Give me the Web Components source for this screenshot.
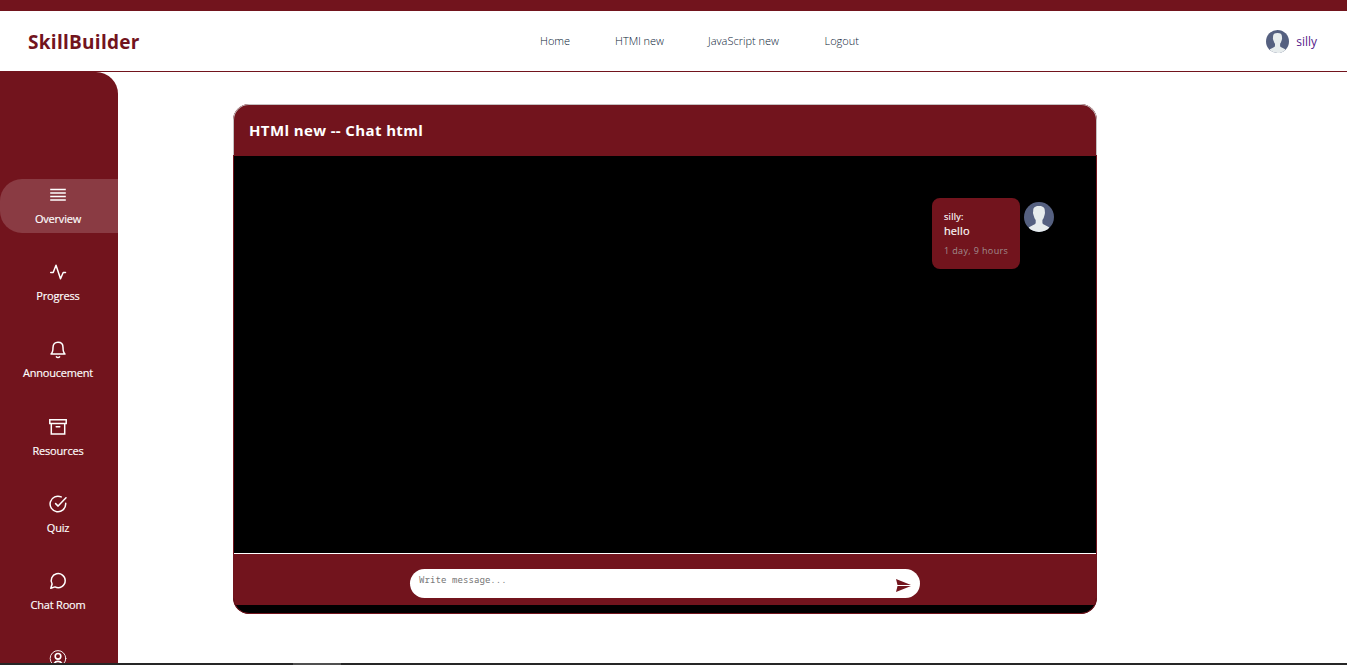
<!DOCTYPE html>
<html lang="en">
<head>
<meta charset="utf-8">
<title>SkillBuilder</title>
<style>
html,body{margin:0;height:100%;overflow:hidden;background:#fff;font-family:"Open Sans","Noto Sans",sans-serif}
</style>
</head>
<body>
<skill-app></skill-app>
<script>
const define = (name, html, setup) => customElements.define(name, class extends HTMLElement {
  constructor() {
    super();
    const t = document.createElement('template');
    t.innerHTML = html;
    this.attachShadow({mode: 'open'}).append(t.content.cloneNode(true));
  }
  connectedCallback() { if (setup) setup(this, this.shadowRoot); }
});

define('user-avatar', `
<style>:host{display:block;width:var(--size,30px);height:var(--size,30px);border-radius:50%;overflow:hidden;flex:none}svg{display:block;width:100%;height:100%}</style>
<svg viewBox="0 0 30 30"><rect width="30" height="30" fill="#556080"/><path fill="#e7eced" d="M9.200 8.500C9.200 5.500 11 4 15 4s5.800 1.500 5.800 4.500c0 1.200.4 2.300 0 3.500-.2 1-.4 1.600-.7 2.500-.3 1.600-1 2.700-1.700 3.400v2.600c0 1 .6 1.600 1.500 2l5.200 2.700V30H5v-4.800l5.200-2.700c.9-.4 1.500-1 1.500-2v-2.600c-.7-.7-1.400-1.800-1.700-3.400-.3-.9-.6-1.500-.8-2.500-.4-1.200 0-2.300 0-3.500z"/></svg>`);

define('app-header', `
<style>
:host{display:grid;grid-template-columns:540px 1fr auto;align-items:center;height:60px;border-bottom:1px solid #72141d;background:#fff}
.logo{padding-left:28px;padding-top:1px;font-size:19px;line-height:26px;font-weight:700;color:#72141d;letter-spacing:.28px}
nav{display:flex;font-size:11px;line-height:16px;color:#0a2236;font-weight:300;white-space:nowrap}
.user{display:flex;align-items:center;gap:7px;padding:1px 30px 0 0;--size:23px;font-size:12px;line-height:18px;color:#551a8b}
.user slot{display:block;padding-top:1px}
</style>
<div class="logo"><slot name="logo"></slot></div>
<nav><slot></slot></nav>
<div class="user"><user-avatar></user-avatar><slot name="user"></slot></div>`);

define('nav-link', `
<style>:host{display:block;width:var(--w);letter-spacing:var(--ls,0)}</style><slot></slot>`);

const icons = {
  menu: '<g stroke-width="1.4" stroke-linecap="butt"><path d="M1.200 3.500h15.600M1.200 7h15.600M1.200 10.500h15.600M1.200 14h15.600"/></g>',
  activity: '<path d="M1.700 9.500h2.500L7 2.300l4.500 13.400 2.700-6.200h2.300"/>',
  bell: '<path d="M2 14c1.400-1.200 2-2.800 2-6.500C4 4 6 2.300 9 2.300S14 4 14 7.500c0 3.700.6 5.300 2 6.500zM7.400 16.900c.6.8 2.600.8 3.200 0"/>',
  archive: '<path stroke-linejoin="miter" d="M.8 1.800h16.400v3.700H.8zM2.300 5.600h13.400v10.400H2.300zM7.200 8.700h3.600"/>',
  check: '<path d="M16.700 8.200V9a7.800 7.800 0 1 1-4.500-7.100M17 2.800l-7.900 8.300-2.500-2.500"/>',
  chat: '<path d="M16.200 8.600A7 7 0 0 1 6 14.900L1.800 16.200 3.100 12A7 7 0 1 1 16.200 8.600z"/>',
  person: '<g stroke-width=".9"><circle cx="9" cy="9.400" r="7.800"/><path stroke-width="1.700" d="M4.700 15.600c.8-2.500 2-3.200 4.300-3.200s3.500.7 4.300 3.200"/><circle stroke-width="1.600" cx="9" cy="7.300" r="2.800"/></g>'
};
define('side-item', `
<style>
:host{display:flex;flex-direction:column;align-items:center;box-sizing:border-box;height:54px;padding:7px 2px 0 0;border-radius:22px 0 0 22px;color:#fff;font-size:11px;line-height:16px;flex:none;letter-spacing:var(--ls,-.2px)}
:host([active]){background:#8a3b43}
svg{display:block;width:18px;height:18px;margin-bottom:7px;fill:none;stroke:#fff;stroke-width:1.500;stroke-linejoin:round;stroke-linecap:round;overflow:visible}
span{-webkit-text-stroke:.15px #fff}
</style><svg viewBox="0 0 18 18"></svg><span><slot></slot></span>`,
(el, root) => { root.querySelector('svg').innerHTML = icons[el.getAttribute('icon')]; });

define('side-bar', `
<style>:host{display:flex;flex-direction:column;gap:23.2px;box-sizing:border-box;width:118px;padding-top:107px;background:#72141d;border-radius:0 22px 0 0;overflow:hidden;min-height:0}</style><slot></slot>`);

define('chat-message', `
<style>
:host{display:flex;align-items:flex-start;gap:4px}
.bubble{box-sizing:border-box;width:88px;height:71px;padding:12px 0 0 12px;border-radius:8px;background:#72141d;color:#fff;white-space:nowrap}
.name{font-size:9px;line-height:14px;letter-spacing:.3px;-webkit-text-stroke:.15px #fff}
.text{font-size:11px;line-height:14px;letter-spacing:.1px;-webkit-text-stroke:.15px #fff}
.time{font-size:9px;line-height:13px;margin-top:6px;color:#a08d8e;letter-spacing:.37px}
user-avatar{margin-top:3.500px}
</style>
<div class="bubble"><div class="name"><slot name="name"></slot></div><div class="text"><slot></slot></div><div class="time"><slot name="time"></slot></div></div>
<user-avatar></user-avatar>`);

define('message-box', `
<style>
:host{display:flex;align-items:flex-start;justify-content:space-between;box-sizing:border-box;width:510px;height:29px;padding:5px 9px 0;border-radius:14.500px;background:#fff;color:#757575;font:9px/12px "Noto Sans Mono","DejaVu Sans Mono",monospace;letter-spacing:.09px}
svg{display:block;width:15px;height:13px;margin-top:5px}
</style>
<span><slot></slot></span>
<svg viewBox="0 0 15 13" fill="#72141d"><path d="M0 0l15 6H1.500zM0 13l15-6H1.500z"/></svg>`);

define('chat-panel', `
<style>
:host{display:flex;flex-direction:column;box-sizing:border-box;width:864px;height:510px;border-radius:16px;overflow:hidden;background:#72141d}
.title{box-sizing:border-box;height:51px;padding:14px 15px 0;border:1px solid #c5c0c1;border-bottom:0;border-radius:16px 16px 0 0;color:#fff;font-size:15px;line-height:22px;font-weight:700;letter-spacing:.38px}
.main{display:flex;flex-direction:column;flex:1;box-sizing:border-box;border:1px solid #72141d;border-radius:0 0 16px 16px;background:#000;overflow:hidden}
.messages{height:397px;box-sizing:border-box;padding:42px 42px 0;display:flex;justify-content:flex-end}
.compose{display:flex;justify-content:center;box-sizing:border-box;height:52px;padding-top:15px;border-top:1px solid #fff;background:#72141d}
</style>
<div class="title"><slot name="title"></slot></div>
<div class="main"><div class="messages"><slot></slot></div><div class="compose"><slot name="compose"></slot></div></div>`);

define('skill-app', `
<style>
:host{display:grid;grid-template-rows:11px 61px 1fr 2px;height:100vh;background:#fff}
.top{background:#72141d}
.content{display:grid;grid-template-columns:118px 1fr;min-height:0;overflow:hidden}
.stage{padding:32px 0 0 115px}
.taskbar{display:flex;background:#262626;padding-left:293px}
.taskbar i{width:48px;background:#505050}
</style>
<div class="top"></div>
<app-header><span slot="logo">SkillBuilder</span>
<nav-link style="--w:75px;--ls:-.03px">Home</nav-link><nav-link style="--w:93px">HTMl new</nav-link><nav-link style="--w:116.500px">JavaScript new</nav-link><nav-link style="--w:40px">Logout</nav-link>
<span slot="user">silly</span></app-header>
<div class="content">
<side-bar>
<side-item icon="menu" active>Overview</side-item>
<side-item icon="activity">Progress</side-item>
<side-item icon="bell">Annoucement</side-item>
<side-item icon="archive">Resources</side-item>
<side-item icon="check">Quiz</side-item>
<side-item icon="chat">Chat Room</side-item>
<side-item icon="person"></side-item>
</side-bar>
<div class="stage"><chat-panel><span slot="title">HTMl new -- Chat html</span>
<chat-message><span slot="name">silly:</span>hello<span slot="time">1 day, 9 hours</span></chat-message>
<message-box slot="compose">Write message...</message-box></chat-panel></div>
</div>
<div class="taskbar"><i></i></div>`);
</script>
</body>
</html>
